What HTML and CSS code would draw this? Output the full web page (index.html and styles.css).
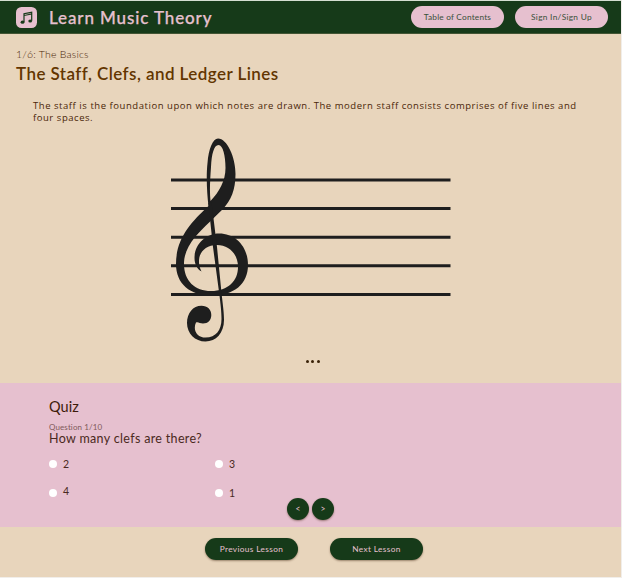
FILE: index.html
```html
<!DOCTYPE html>
<html lang="en">
<head>
<meta charset="utf-8">
<title>Learn Music Theory</title>
<link rel="stylesheet" href="styles.css">
</head>
<body>
<div class="page">
  <header class="topbar">
    <svg class="logo" viewBox="0 0 21 21" aria-hidden="true">
      <rect width="21" height="21" rx="5.5" fill="#e6c0cf"/>
      <path d="M8 15V6.7L15.7 5.3V13.7M8 8.5L15.7 7" fill="none" stroke="#163a19" stroke-width="1.2"/>
      <ellipse cx="6.500" cy="15.200" rx="1.900" ry="1.600" fill="#163a19"/>
      <ellipse cx="14.200" cy="14" rx="1.900" ry="1.600" fill="#163a19"/>
    </svg>
    <div class="brand">Learn Music Theory</div>
    <nav class="actions">
      <button class="pill pill-light toc">Table of Contents</button>
      <button class="pill pill-light sign">Sign In/Sign Up</button>
    </nav>
  </header>
  <main class="lesson">
    <div class="crumb">1/6: The Basics</div>
    <h1 class="title">The Staff, Clefs, and Ledger Lines</h1>
    <p class="intro">The staff is the foundation upon which notes are drawn. The modern staff consists comprises of five lines and<br>four spaces.</p>
    <svg class="staff" viewBox="160 130 300 220" aria-label="Treble clef on a staff">
      <path d="M171 180H450.500M171 208.600H450.500M171 237.200H450.500M171 265.800H450.500M171 294.400H450.500" stroke="#1e1e1e" stroke-width="3"/>
      <path fill="#1e1e1e" fill-rule="evenodd" d="M208.500 206C207 194 206 176 207.500 163C208.500 149 213 138.500 218 138.500C227 138.500 235.500 157 235.500 174C235.500 190 231 200 223 209C215 217 204 227 195 237C188 246 184 254 184 264C184 281 195 291 211 291C228 291 238 281 238 267C238 254 229 245 217 245C206 245 199 252 199 261C199 266 200 268 201.500 271.500C197 269 194.500 264 194.500 258C194.500 244 206 233.500 219 233.500C236 233.500 248 247 248 265C248 284 234 295.500 212 295.500C190 295.500 176 284 176 264C176 239 190 223 208.500 206ZM210.500 201C219 192 225.500 181 225.500 168C225.500 156 223 145 218.500 145C214 145 211.500 154 211 167C210 181 209.500 192 210.500 201Z"/>
      <path fill="#1e1e1e" d="M208.300 203L211.500 202L217 247L221.500 293C223 306 224 313 224 320C224 333 216 341.500 205.500 341.500C195 341.500 187 333.500 187 323C187 313 193 305.700 201.500 305.700C207.500 305.700 211.300 309.500 211.300 315C211.300 320 208 323.500 203 323.500C200 323.500 198 321.500 196 322.500C192.500 330 197 337.500 205.500 337.500C216 337.500 221.500 330 221.500 319C221.500 311 220.500 304 219.300 294L213 247Z"/>
    </svg>
    <div class="dots"><i></i><i></i><i></i></div>
  </main>
  <section class="quiz">
    <h2 class="quiz-title">Quiz</h2>
    <div class="count">Question 1/10</div>
    <div class="question">How many clefs are there?</div>
    <div class="answers">
      <label><i></i><span>2</span></label>
      <label><i></i><span>3</span></label>
      <label class="raised"><i></i><span>4</span></label>
      <label><i></i><span>1</span></label>
    </div>
    <div class="pager"><button>&lt;</button><button>&gt;</button></div>
  </section>
  <footer class="lesson-nav">
    <button class="pill pill-dark prev">Previous Lesson</button>
    <button class="pill pill-dark next">Next Lesson</button>
  </footer>
</div>
</body>
</html>
```
FILE: styles.css
```css
* { box-sizing: border-box; }
body { margin: 0; background: #f1eeea; font-family: Lato, "Open Sans", sans-serif; color: #4a2608; overflow: hidden; }
button { font: inherit; border: 0; padding: 0; white-space: nowrap; }
.page { width: 621px; height: 577px; background: #e8d5bc; border-top: 1px solid #d5dfd2; }
.topbar { height: 33px; background: #163a19; display: flex; align-items: center; padding: 0 13px 0 16px; border-bottom: 1px solid #425534; }
.logo { width: 21px; height: 21px; margin-right: 12px; }
.brand { color: #e6c0cf; font-size: 17px; font-weight: 500; line-height: 24px; padding-top: 2px; letter-spacing: 0.88px; -webkit-text-stroke: 0.25px #e6c0cf; white-space: nowrap; }
.actions { display: flex; gap: 11px; margin-left: auto; }
.pill { width: 93px; height: 22px; border-radius: 11px; font-size: 8.3px; line-height: 22px; text-align: center; }
.pill-light { background: #e6c0cf; color: #39513a; }
.pill-dark { background: #163a19; color: #e6c0cf; letter-spacing: 0.35px; box-shadow: 0 1px 2px rgba(60, 30, 10, .45); }
.toc { letter-spacing: 0.2px; }
.sign { letter-spacing: 0.3px; }
.lesson { height: 349px; padding: 13px 16px 0; }
.crumb { font-size: 10.5px; line-height: 14px; font-weight: 300; letter-spacing: 0.2px; color: #4a2608; white-space: nowrap; }
.title { margin: 3px 0 0; font-size: 17px; line-height: 20px; font-weight: 600; letter-spacing: 0.44px; color: #633500; white-space: nowrap; }
.intro { margin: 16px 0 0 17px; font-family: "Open Sans", sans-serif; font-size: 9.5px; line-height: 12px; letter-spacing: 0.545px; white-space: nowrap; }
.staff { display: block; width: 300px; height: 220px; margin: 6px 0 0 144px; }
.dots { display: flex; gap: 2.500px; justify-content: center; margin-top: 10px; padding-left: 4px; }
.dots i { width: 3px; height: 3px; border-radius: 50%; background: #3a2208; }
.quiz { position: relative; height: 144px; background: #e6c0cf; padding: 14px 49px 0; color: #4a2921; }
.quiz-title { margin: 0; font-size: 14.500px; line-height: 20px; font-weight: 400; color: #3d1b0a; letter-spacing: 0.1px; }
.count { margin-top: 5px; font-size: 8px; line-height: 10px; color: #805a5a; letter-spacing: 0.1px; }
.question { font-size: 12.500px; line-height: 14px; letter-spacing: 0.33px; }
.answers { display: grid; grid-template-columns: 166px 166px; grid-template-rows: 28.500px 28.500px; margin-top: 4px; font-size: 10.5px; }
.answers label { display: flex; align-items: center; gap: 6px; }
.answers i { width: 8px; height: 8px; border-radius: 50%; background: #fff; }
.raised span { margin-top: -3px; }
.pager { position: absolute; left: 287px; top: 115px; display: flex; gap: 3px; }
.pager button { width: 22px; height: 22px; border-radius: 50%; background: #163a19; color: #e6c0cf; font-size: 8.5px; box-shadow: 0 1px 2px rgba(60, 30, 10, .45); }
.lesson-nav { display: flex; gap: 32px; padding: 11px 0 0 205px; }
```
